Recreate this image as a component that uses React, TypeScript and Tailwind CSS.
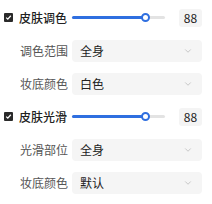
import React from 'react';
import { ChevronDown } from 'lucide-react';

const font = { fontFamily: '"Noto Sans CJK SC", "Noto Sans", sans-serif' };

const SliderRow: React.FC<{ label: string; value: number }> = ({ label, value }) => (
  <div className="flex items-center h-[33px]">
    <div className="w-[9px] h-[9px] ml-[4px] rounded-[1px] bg-[#2a2a2a] flex items-center justify-center">
      <svg width="7" height="7" viewBox="0 0 7 7">
        <path d="M1.2 3.6 L2.8 5.1 L5.8 1.8" stroke="#fff" strokeWidth="1.3" fill="none" />
      </svg>
    </div>
    <span className="ml-[6px] w-[53px] text-[12px] font-medium text-[#222] leading-none">{label}</span>
    <div className="relative w-[93px] h-[3px] rounded-full bg-[#e3e3e3]">
      <div className="absolute left-0 top-0 h-[3px] w-[71px] rounded-full bg-[#2f6fe0]" />
      <div className="absolute left-[69px] top-[-3px] w-[9px] h-[9px] rounded-full bg-white border-2 border-[#2f6fe0]" />
    </div>
    <div className="ml-auto mr-[10px] w-[23px] h-[18px] rounded-[3px] bg-[#f4f4f4] flex items-center justify-center text-[12px] text-[#222]">
      {value}
    </div>
  </div>
);

const SelectRow: React.FC<{ label: string; value: string }> = ({ label, value }) => (
  <div className="flex items-center h-[33px]">
    <span className="ml-[20px] text-[12px] text-[#555] leading-none">{label}</span>
    <div className="ml-auto mr-[10px] w-[130px] h-[22px] rounded-[4px] bg-[#f5f5f5] flex items-center px-[8px]">
      <span className="text-[12px] text-[#222]">{value}</span>
      <ChevronDown size={10} className="ml-auto mr-[1px] text-[#aaa]" strokeWidth={1.5} />
    </div>
  </div>
);

export default function App() {
  return (
    <div className="w-[212px] h-[204px] bg-white pt-[1px]" style={font}>
      <SliderRow label="皮肤调色" value={88} />
      <SelectRow label="调色范围" value="全身" />
      <SelectRow label="妆底颜色" value="白色" />
      <SliderRow label="皮肤光滑" value={88} />
      <SelectRow label="光滑部位" value="全身" />
      <SelectRow label="妆底颜色" value="默认" />
    </div>
  );
}
